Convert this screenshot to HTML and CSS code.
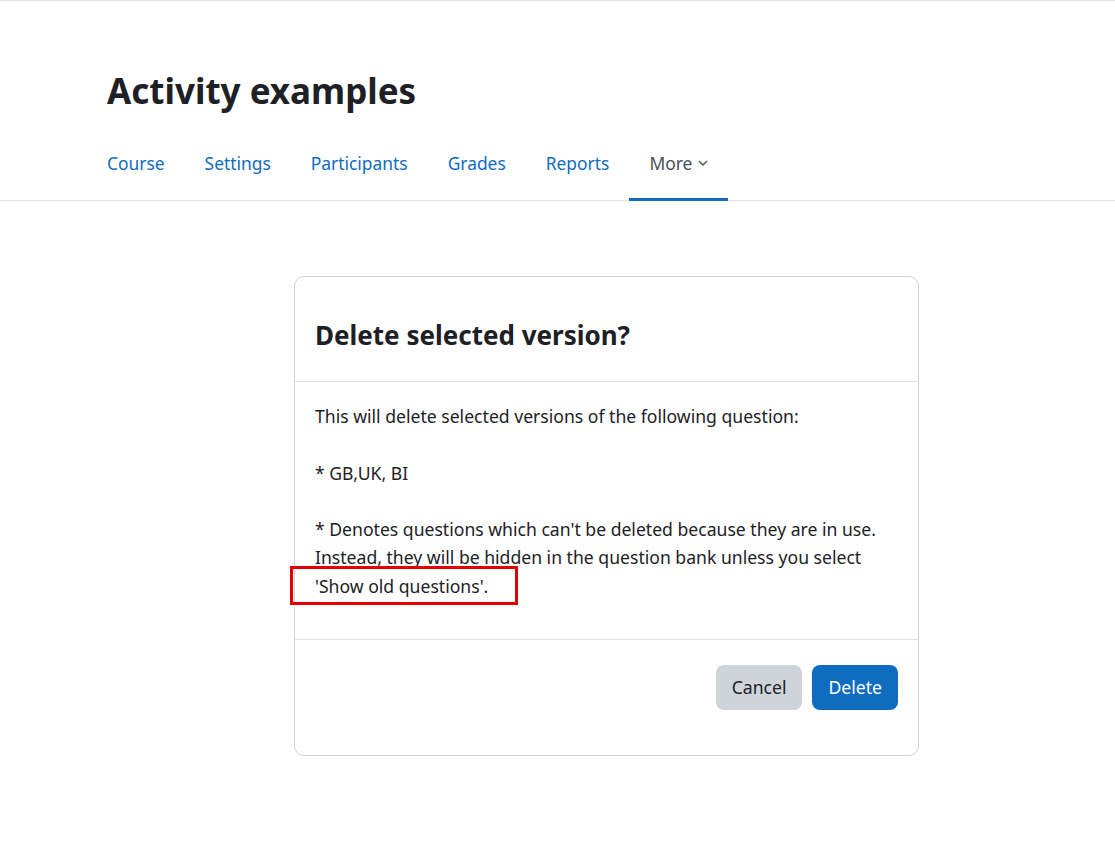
FILE: index.html
```html
<!DOCTYPE html>
<html lang="en">
<head>
    <meta charset="UTF-8">
    <meta name="viewport" content="width=device-width, initial-scale=1.0">
    <title>Activity examples</title>
    <link rel="stylesheet" href="styles.css">
</head>
<body>
    <div class="topbar"></div>
    <header class="page-header">
        <h1 class="page-title">Activity examples</h1>
        <nav class="secondary-nav">
            <a href="#" class="nav-link">Course</a>
            <a href="#" class="nav-link">Settings</a>
            <a href="#" class="nav-link">Participants</a>
            <a href="#" class="nav-link">Grades</a>
            <a href="#" class="nav-link">Reports</a>
            <a href="#" class="nav-link active">More
                <svg class="chevron" width="10" height="6" viewBox="0 0 10 6"><path d="M1 1l4 4 4-4" fill="none" stroke="currentColor" stroke-width="1.4"/></svg>
            </a>
        </nav>
    </header>
    <main class="page-content">
        <div class="modal">
            <div class="modal-header">
                <h2 class="modal-title">Delete selected version?</h2>
            </div>
            <div class="modal-body">
                This will delete selected versions of the following question:<br><br>
                * GB,UK, BI<br><br>
                * Denotes questions which can't be deleted because they are in use. Instead, they will be hidden in the question bank unless you select 'Show old questions'.
                <span class="highlight-box"></span>
            </div>
            <div class="modal-footer">
                <button class="btn btn-secondary">Cancel</button>
                <button class="btn btn-primary">Delete</button>
            </div>
        </div>
    </main>
</body>
</html>
```

FILE: styles.css
```css
body {
    font-family: "Noto Sans", "Open Sans", sans-serif;
    margin: 0;
    padding: 0;
    background-color: #fff;
    color: #1d2125;
}

.topbar {
    height: 1px;
    background-color: #dee2e6;
}

.page-header {
    padding: 69px 0 0 107px;
    border-bottom: 1px solid #dee2e6;
}

.page-title {
    margin: 0;
    font-size: 35px;
    font-weight: 700;
    line-height: 42px;
}

.secondary-nav {
    display: flex;
    margin: 15px 0 0 -20px;
}

.nav-link {
    display: flex;
    align-items: center;
    gap: 6px;
    padding: 0 20px;
    height: 74px;
    font-size: 17.4px;
    color: #0f6cbf;
    text-decoration: none;
    border-bottom: 3px solid transparent;
    box-sizing: border-box;
    margin-bottom: -1px;
}

.nav-link.active {
    color: #495057;
    border-bottom-color: #0f6cbf;
}

.page-content {
    padding: 75px 0 0 294px;
}

.modal {
    width: 625px;
    border: 1px solid #d0d4d9;
    border-radius: 10px;
    box-sizing: border-box;
}

.modal-header {
    padding: 43px 20px 31px;
    border-bottom: 1px solid #dee2e6;
}

.modal-title {
    margin: 0;
    font-size: 26px;
    font-weight: 700;
    line-height: 30px;
}

.modal-body {
    position: relative;
    padding: 20px 20px 39px;
    font-size: 17.6px;
    line-height: 28.25px;
}

.highlight-box {
    position: absolute;
    left: -5px;
    top: 184px;
    width: 228px;
    height: 39px;
    box-sizing: border-box;
    border: 3px solid #e50000;
}

.modal-footer {
    display: flex;
    justify-content: flex-end;
    gap: 10px;
    padding: 25px 20px 45px;
    border-top: 1px solid #dee2e6;
}

.btn {
    font-family: inherit;
    font-size: 17.6px;
    height: 45px;
    padding: 0 16px;
    border: none;
    border-radius: 8px;
    cursor: pointer;
}

.btn-secondary {
    background-color: #ced4da;
    color: #1d2125;
}

.btn-primary {
    background-color: #0f6cbf;
    color: #fff;
}
```
